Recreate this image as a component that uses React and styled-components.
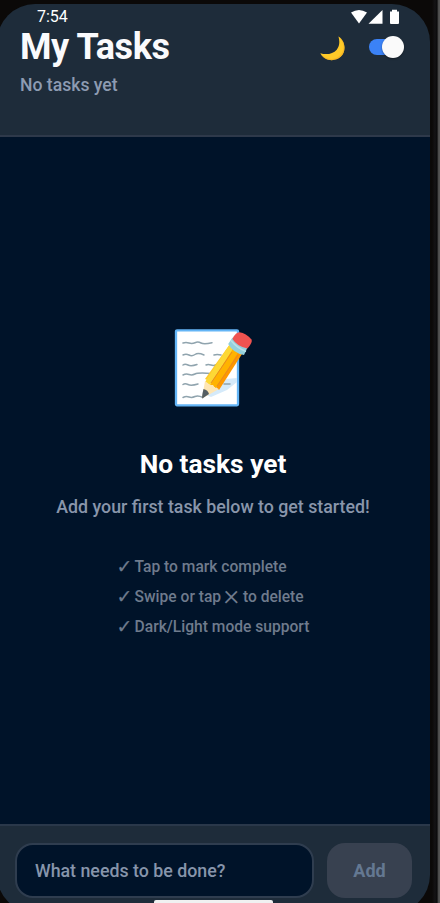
import React from "react";
import styled, { createGlobalStyle } from "styled-components";

const Global = createGlobalStyle`
  * { box-sizing: border-box; }
  html, body { margin: 0; background: #0b0b0c; }
  body { font-family: Roboto, "Liberation Sans", sans-serif; overflow: hidden; }
`;

const Device = styled.div`
  height: 903px;
  width: 440px;
  overflow: hidden;
  padding-top: 4px;
  background: linear-gradient(to right, #0b0908 0, #0b0908 432px, #141315 435px, #0a0a0b 437px, #3c3c3c 438px, #5a5a5a 439px, #4c4c4c 440px);
`;

const Screen = styled.main`
  display: flex;
  flex-direction: column;
  width: 433px;
  height: 909px;
  margin-left: -3px;
  padding-left: 3px;
  border-radius: 38px;
  overflow: hidden;
  background: #1e2c3a;
`;

const StatusBar = styled.div`
  display: flex;
  justify-content: space-between;
  height: 24px;
  padding: 3px 30px 0 37px;
  color: #fff;
  font-size: 16px;
  line-height: 20px;
`;

const StatusIcons = styled.svg`
  display: block;
  width: 50px;
  height: 16px;
  margin-top: 2px;
`;

const Header = styled.header`
  display: flex;
  flex: none;
  justify-content: space-between;
  height: 109px;
  padding: 0 26px 0 20px;
  border-bottom: 2px solid #2e394a;
`;

const Title = styled.h1`
  margin: 0;
  color: #fafafc;
  font-size: 36px;
  font-weight: 700;
  line-height: 38px;
  letter-spacing: -0.4px;
`;

const Subtitle = styled.p`
  margin: 8px 0 0;
  color: #8d9bb2;
  font-size: 17.6px;
  font-weight: 500;
  line-height: 22px;
`;

const ThemeControl = styled.div`
  display: flex;
  gap: 24px;
  height: 38px;
  align-items: center;
`;

const Moon = styled.svg`
  width: 25px;
  height: 25px;
  margin-top: 2px;
`;

const Toggle = styled.button`
  display: flex;
  align-items: center;
  justify-content: flex-end;
  width: 35px;
  height: 16px;
  padding: 0;
  border: 0;
  border-radius: 8px;
  background: linear-gradient(to right, #3b82f6 26px, transparent 26px);
`;

const Knob = styled.span`
  flex: none;
  width: 22px;
  height: 22px;
  border-radius: 50%;
  background: #fafafa;
  box-shadow: 0 1px 2px #0006;
`;

const Empty = styled.section`
  display: flex;
  flex: none;
  flex-direction: column;
  align-items: center;
  height: 687px;
  padding: 191px 4px 0 0;
  background: #001329;
`;

const Memo = styled.svg`
  width: 80px;
  height: 80px;
  margin: 0 0 40px 2px;
`;

const EmptyTitle = styled.h2`
  margin: 0;
  color: #fff;
  font-size: 26.3px;
  font-weight: 700;
  line-height: 32px;
`;

const EmptyText = styled.p`
  margin: 15px 0 0;
  color: #8996ab;
  font-size: 17.8px;
  font-weight: 500;
  line-height: 24px;
`;

const Tips = styled.ul`
  margin: 33px 0 0;
  padding: 0;
  list-style: none;
  color: #6f7b8d;
  font-size: 15.6px;
  font-weight: 500;
  line-height: 30px;
`;

const Tip = styled.li`
  height: 30px;
  white-space: pre;
`;

const Check = styled.span`
  display: inline-block;
  width: 18px;
  font-family: "DejaVu Sans", sans-serif;
  font-weight: 400;
  font-size: 19px;
  line-height: 0;
  vertical-align: -1px;
  -webkit-text-stroke: 0.2px currentColor;
`;

const Cross = styled.span`
  display: inline-block;
  width: 14px;
  font-size: 30px;
  font-weight: 300;
  line-height: 0;
  text-indent: -1.5px;
  vertical-align: -3px;
`;

const Composer = styled.form`
  display: flex;
  gap: 13px;
  height: 89px;
  padding: 17px 18px 0 15px;
  border-top: 2px solid #2a384a;
`;

const Field = styled.input`
  width: 299px;
  height: 55px;
  padding: 0 18px;
  border: 2px solid #2f3d4f;
  border-radius: 18px;
  outline: 0;
  background: #001329;
  font: 500 17.8px Roboto, sans-serif;
  &::placeholder { color: #8795ab; opacity: 1; }
`;

const AddButton = styled.button`
  width: 85px;
  height: 55px;
  padding: 0;
  border: 0;
  border-radius: 18px;
  background: #384150;
  color: #647892;
  font: 700 18px Roboto, sans-serif;
`;

const HomeBar = styled.div`
  position: absolute;
  top: 899.5px;
  left: 154px;
  width: 119px;
  height: 6px;
  border-radius: 2px;
  background: #f0f1f1;
`;

function MoonIcon() {
  return (
    <Moon viewBox="0 0 26 26" aria-label="Dark mode">
      <path d="M19.2.4C27 5.5 27.3 16.5 21.5 21.7C15 27.4 4.5 26 .4 17.9C6.5 19.8 13.5 18.8 17.4 14.2C20.7 10.3 20.5 5.2 19.2.4Z" fill="#ffca28" />
      <path d="M.4 17.9C4.5 26 15 27.4 21.5 21.7C27.3 16.5 27 5.5 19.2.4C26 6.5 26 15.5 20.5 20.5C14.5 26 5 24.5.4 17.9Z" fill="#f4ae22" opacity=".7" />
    </Moon>
  );
}

function MemoIcon() {
  return (
    <Memo viewBox="0 0 80 80" aria-label="Memo">
      <rect x="2" y="2.3" width="62" height="75" rx="1" fill="#fff" stroke="#64b5f6" strokeWidth="2.3" />
      <path d="M63 50V54L53 62L37 69L32 67L52 51Z" fill="#d5eafa" />
      <g fill="none" stroke="#90a4ae" strokeWidth="1.5" strokeLinecap="round">
        <path d="M9 15Q12 14 15 15T21 14.7T27 15T38 14.7" />
        <path d="M9 27Q12 25.5 15 27T21 26.5T30 27M40 27Q43 26 47 27" />
        <path d="M9 37Q11 35.5 14 37T23 36.5M32 37Q34 36 37 37T43 36.5" />
        <path d="M9 47Q12 45.5 15 46.5T21 46T37 45.5" />
        <path d="M9 56.5Q11 55 14 56.5T24 56M50 56H56" />
        <path d="M9 69.5Q12 68 15 69T21 68.5T29 69.5" />
      </g>
      <path d="M56 16L67 25L45 57L31 51Z" fill="#ffca28" />
      <path d="M60 20L68 26L45 62L38 55Z" fill="#ff9800" />
      <path d="M56 16L61.5 20L36 57L31 54Z" fill="#fdd835" />
      <path d="M60 19L65 23L42 60L36 57Z" fill="#ffb300" />
      <path d="M58 24L37 55M64 27L43 58" stroke="#e88a22" strokeWidth="1" />
      <path d="M31 53L36 57L39 57L41 60L45 61L28 70.5Z" fill="#ffe6b3" />
      <path d="M29.5 61Q34 62 35 66L28.3 70.5Q27.5 69 29.5 61Z" fill="#555e62" />
      <path d="M58.5 9.5Q64 15 73.5 19.5L70 27Q59 25 54.2 16Z" fill="#94d0dc" />
      <path d="M57 12.500Q63 20 72 23.500" fill="none" stroke="#b9e0e7" strokeWidth="1.5" />
      <path d="M58.5 11C59.5 8 62 4.500 65.5 4.200Q72 5 77.500 11.500Q79 14 73.5 20.500Q63 18.500 58.500 11Z" fill="#ef5350" />
    </Memo>
  );
}

export default function App() {
  return (
    <Device>
      <Global />
      <Screen>
        <StatusBar>
          <span>7:54</span>
          <StatusIcons viewBox="0 0 50 16" fill="#fff" aria-hidden="true">
            <path d="M1 3.5Q9-1.5 17 3.5L9 14.5Z" />
            <path d="M18.5 14.8L32.5 1V14.8Z" />
            <path d="M40 2.5H42V.8H47V2.5H49V14Q49 15 48 15H41Q40 15 40 14Z" />
          </StatusIcons>
        </StatusBar>
        <Header>
          <div>
            <Title>My Tasks</Title>
            <Subtitle>No tasks yet</Subtitle>
          </div>
          <ThemeControl>
            <MoonIcon />
            <Toggle role="switch" aria-checked="true"><Knob /></Toggle>
          </ThemeControl>
        </Header>
        <Empty>
          <MemoIcon />
          <EmptyTitle>No tasks yet</EmptyTitle>
          <EmptyText>Add your first task below to get started!</EmptyText>
          <Tips>
            <Tip><Check>✓</Check>Tap to mark complete</Tip>
            <Tip><Check>✓</Check>Swipe or tap <Cross>×</Cross> to delete</Tip>
            <Tip><Check>✓</Check>Dark/Light mode support</Tip>
          </Tips>
        </Empty>
        <Composer>
          <Field placeholder="What needs to be done?" />
          <AddButton type="button">Add</AddButton>
        </Composer>
      </Screen>
      <HomeBar />
    </Device>
  );
}
